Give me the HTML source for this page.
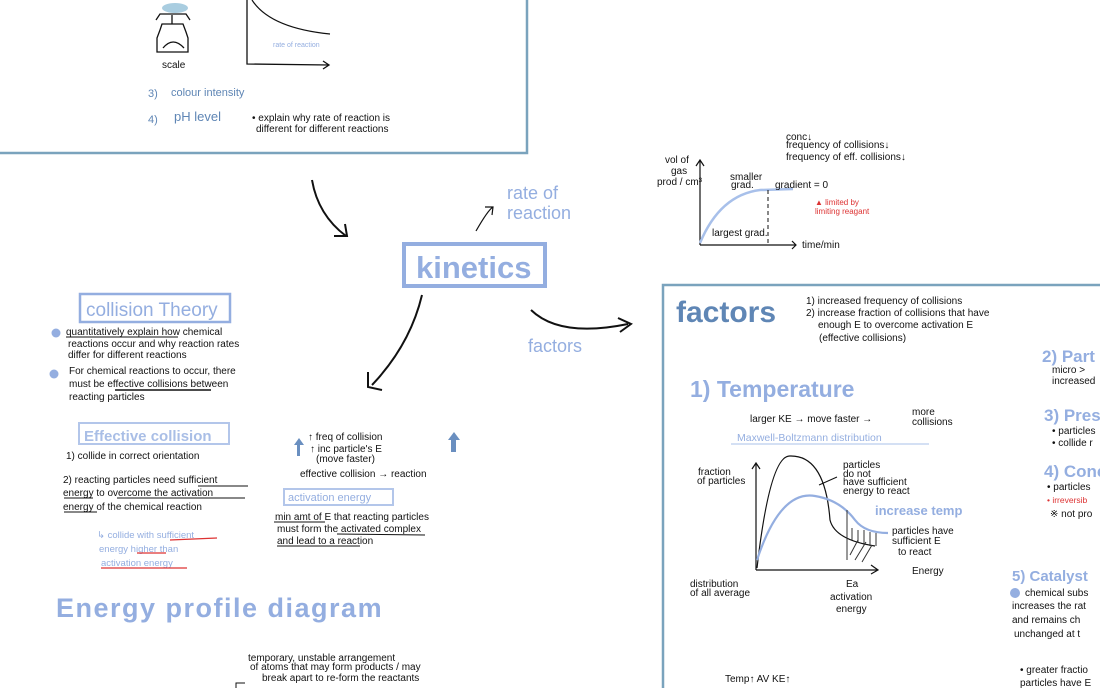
<!DOCTYPE html>
<html><head><meta charset="utf-8"><style>
html,body{margin:0;padding:0;background:#fff;width:1100px;height:688px;overflow:hidden}
svg{display:block}
text{font-family:"Liberation Sans",sans-serif}
.k{fill:#111;font-size:10px}
.b{fill:#94aee0}
.d{fill:#5f86b5}
</style></head><body>
<svg width="1100" height="688" viewBox="0 0 1100 688" xmlns="http://www.w3.org/2000/svg">
<polyline points="0,153 527,153 527,0" fill="none" stroke="#7aa3bd" stroke-width="2.5"/>
<ellipse cx="175" cy="8" rx="13" ry="5" fill="#a9cde0"/>
<path d="M156,20 L160,14 L186,14 L190,20 M172,15 L172,24 M162,24 L183,24 L186,32 L188,38 L188,52 L157,52 L157,38 L160,30 Z" stroke="#111" fill="none" stroke-width="1.3"/>
<path d="M163,48 Q173,36 184,48" stroke="#111" fill="none" stroke-width="1.3"/>
<text x="162" y="68" class="k" font-size="8">scale</text>
<path d="M247,0 L247,64 L329,65 M323,61 L329,65 L323,69" stroke="#111" fill="none" stroke-width="1.3"/>
<path d="M252,0 Q270,28 330,34" stroke="#111" fill="none" stroke-width="1.2"/>
<text x="273" y="47" class="b" font-size="7">rate of reaction</text>
<text x="148" y="97" class="d" font-size="11">3)</text><text x="171" y="96" class="d" font-size="11">colour intensity</text>
<text x="148" y="123" class="d" font-size="11">4)</text><text x="174" y="121" class="d" font-size="13">pH level</text>
<text x="252" y="121" class="k" font-size="9.5">• explain why rate of reaction is</text>
<text x="256" y="132" class="k" font-size="9.5">different for different reactions</text>
<path d="M312,180 Q318,215 346,236 M334,236 L347,236 L345,224" stroke="#111" fill="none" stroke-width="2"/>
<path d="M476,231 Q488,210 493,207 M485,207 L493,207 L492,215" stroke="#111" fill="none" stroke-width="1.2"/>
<text x="507" y="199" class="b" font-size="18">rate of</text>
<text x="507" y="219" class="b" font-size="18">reaction</text>
<rect x="404" y="244" width="141" height="42" fill="none" stroke="#94aee0" stroke-width="4"/>
<text x="416" y="278" class="b" font-size="31" font-weight="bold">kinetics</text>
<path d="M422,295 Q410,345 372,385 M368,372 L368,387 L382,390" stroke="#111" fill="none" stroke-width="2"/>
<path d="M531,310 Q560,338 628,324 M618,318 L631,324 L620,332" stroke="#111" fill="none" stroke-width="2"/>
<text x="528" y="352" class="b" font-size="18">factors</text>
<rect x="80" y="294" width="150" height="28" fill="none" stroke="#94aee0" stroke-width="2.5"/>
<text x="86" y="316" class="b" font-size="19">collision Theory</text>
<circle cx="56" cy="333" r="4.5" fill="#94aee0"/>
<circle cx="54" cy="374" r="4.5" fill="#94aee0"/>
<text x="66" y="335" class="k">quantitatively explain how chemical</text>
<line x1="66" y1="337" x2="178" y2="337" stroke="#111"/>
<text x="68" y="347" class="k">reactions occur and why reaction rates</text>
<text x="68" y="358" class="k">differ for different reactions</text>
<text x="69" y="374" class="k">For chemical reactions to occur, there</text>
<text x="69" y="387" class="k">must be effective collisions between</text>
<line x1="115" y1="390" x2="211" y2="390" stroke="#111" stroke-width="1.5"/>
<text x="69" y="400" class="k">reacting particles</text>
<rect x="79" y="423" width="150" height="21" fill="none" stroke="#b3c6ea" stroke-width="2"/>
<text x="84" y="441" class="b" font-size="15" font-weight="bold" opacity=".8">Effective collision</text>
<text x="66" y="459" class="k" font-size="9.5">1) collide in correct orientation</text>
<text x="63" y="483" class="k" font-size="9.5">2) reacting particles need sufficient</text>
<text x="63" y="496" class="k" font-size="9.5">energy to overcome the activation</text>
<text x="63" y="510" class="k" font-size="9.5">energy of the chemical reaction</text>
<path d="M198,486 L248,486 M64,498 L93,498 M117,498 L245,498 M64,512 L97,512" stroke="#111"/>
<text x="97" y="538" class="b" font-size="9.5">↳ collide with sufficient</text>
<text x="99" y="552" class="b" font-size="9.5">energy higher than</text>
<text x="101" y="566" class="b" font-size="9.5">activation energy</text>
<path d="M170,540 L217,538 M137,553 L166,553 M101,568 L187,568" stroke="#d33" stroke-width="1.2"/>
<path d="M294,445 L299,438 L304,445 L300,445 L300,456 L297,456 L297,445 Z" fill="#6a8fc0"/>
<path d="M448,440 L454,432 L460,440 L456,440 L456,452 L451,452 L451,440 Z" fill="#6a8fc0"/>
<text x="308" y="440" class="k" font-size="9">↑ freq of collision</text>
<text x="310" y="452" class="k" font-size="9">↑ inc particle's E</text>
<text x="316" y="462" class="k" font-size="8.5">(move faster)</text>
<text x="300" y="477" class="k" font-size="12">effective collision  → reaction</text>
<rect x="284" y="489" width="109" height="16" fill="none" stroke="#b3c6ea" stroke-width="2"/>
<text x="288" y="501" class="b" font-size="11">activation energy</text>
<text x="275" y="520" class="k" font-size="9">min amt of E that reacting particles</text>
<text x="277" y="532" class="k" font-size="9">must form the activated complex</text>
<text x="277" y="544" class="k" font-size="9">and lead to a reaction</text>
<path d="M274,522 L325,522 M337,534 L425,535 M277,546 L360,546" stroke="#111"/>
<text x="56" y="617" class="b" font-size="27" font-weight="bold" letter-spacing="1.5">Energy profile diagram</text>
<text x="248" y="661" class="k" font-size="9">temporary, unstable arrangement</text>
<text x="250" y="670" class="k" font-size="9">of atoms that may form products / may</text>
<text x="262" y="681" class="k" font-size="9">break apart to re-form the reactants</text>
<path d="M236,688 L236,683 L245,683" stroke="#111" fill="none"/>
<text x="786" y="140" class="k" font-size="7.5">conc↓</text>
<text x="786" y="148" class="k" font-size="7.5">frequency of collisions↓</text>
<text x="786" y="160" class="k" font-size="7.5">frequency of eff. collisions↓</text>
<text x="665" y="163" class="k" font-size="7.5">vol of</text>
<text x="671" y="174" class="k" font-size="7.5">gas</text>
<text x="657" y="185" class="k" font-size="7.5">prod / cm³</text>
<path d="M700,245 L700,160 M696,166 L700,160 L704,166 M700,245 L796,245 M792,241 L796,245 L792,249" stroke="#111" fill="none" stroke-width="1.2"/>
<path d="M700,243 Q720,195 760,190 L793,189" stroke="#a8c0ea" fill="none" stroke-width="2.5"/>
<path d="M768,190 L768,245" stroke="#111" stroke-dasharray="4,3"/>
<text x="730" y="180" class="k" font-size="7.5">smaller</text><text x="731" y="188" class="k" font-size="7.5">grad.</text>
<text x="775" y="188" class="k" font-size="7.5">gradient = 0</text>
<text x="712" y="236" class="k" font-size="7.5">largest grad.</text>
<text x="802" y="248" class="k" font-size="8.5">time/min</text>
<text x="815" y="205" fill="#d33" font-size="8">▲ limited by</text>
<text x="815" y="214" fill="#d33" font-size="8">limiting reagant</text>
<polyline points="1100,285 663,285 663,688" fill="none" stroke="#7aa3bd" stroke-width="2.5"/>
<text x="676" y="322" class="d" font-size="30" font-weight="bold">factors</text>
<text x="806" y="304" class="k" font-size="9">1) increased frequency of collisions</text>
<text x="806" y="316" class="k" font-size="9">2) increase fraction of collisions that have</text>
<text x="818" y="328" class="k" font-size="9">enough E to overcome activation E</text>
<text x="819" y="341" class="k" font-size="9">(effective collisions)</text>
<text x="690" y="397" class="b" font-size="23" font-weight="bold">1) Temperature</text>
<text x="750" y="422" class="k" font-size="10">larger KE → move faster →</text>
<text x="912" y="415" class="k" font-size="9">more</text><text x="912" y="425" class="k" font-size="9">collisions</text>
<text x="737" y="441" class="b" font-size="10.5">Maxwell-Boltzmann distribution</text>
<line x1="731" y1="444" x2="929" y2="444" stroke="#a8c0ea"/>
<text x="698" y="475" class="k" font-size="8">fraction</text>
<text x="697" y="484" class="k" font-size="8">of particles</text>
<path d="M756,570 L756,463 M752,469 L756,463 L760,469 M756,570 L877,570 M871,565 L878,570 L871,574" stroke="#111" fill="none" stroke-width="1.2"/>
<path d="M757,568 Q770,455 790,456 Q825,455 830,520 Q835,540 875,546" stroke="#111" fill="none" stroke-width="1.2"/>
<path d="M757,560 Q780,490 815,496 Q840,500 855,520 Q865,533 888,533" stroke="#94aee0" fill="none" stroke-width="2.2"/>
<path d="M847,510 L847,560 M852,528 L852,540 M858,530 L858,543 M864,530 L864,545 M870,532 L870,546 M876,533 L876,546 M850,555 L858,540 M855,560 L866,542 M862,562 L872,545" stroke="#333" stroke-width="1" fill="none"/>
<text x="843" y="468" class="k" font-size="8">particles</text>
<text x="843" y="477" class="k" font-size="8">do not</text>
<text x="843" y="485" class="k" font-size="8">have sufficient</text>
<text x="843" y="494" class="k" font-size="8">energy to react</text>
<line x1="819" y1="485" x2="837" y2="477" stroke="#111"/>
<text x="875" y="515" class="b" font-size="13" font-weight="bold">increase temp</text>
<text x="892" y="534" class="k" font-size="8">particles have</text>
<text x="892" y="544" class="k" font-size="8">sufficient E</text>
<text x="898" y="555" class="k" font-size="8">to react</text>
<text x="912" y="574" class="k" font-size="6.5">Energy</text>
<text x="690" y="587" class="k" font-size="8">distribution</text>
<text x="690" y="596" class="k" font-size="8">of all average</text>
<text x="846" y="587" class="k" font-size="10">Ea</text>
<text x="830" y="600" class="k" font-size="10">activation</text>
<text x="836" y="612" class="k" font-size="10">energy</text>
<text x="725" y="682" class="k" font-size="8">Temp↑  AV KE↑</text>
<text x="1042" y="362" class="b" font-size="17" font-weight="bold">2) Part</text>
<text x="1052" y="373" class="k" font-size="8.5">micro ></text>
<text x="1052" y="384" class="k" font-size="8.5">increased</text>
<text x="1044" y="421" class="b" font-size="17" font-weight="bold">3) Press</text>
<text x="1052" y="434" class="k" font-size="8.5">• particles</text>
<text x="1052" y="446" class="k" font-size="8.5">• collide r</text>
<text x="1044" y="477" class="b" font-size="17" font-weight="bold">4) Conc</text>
<text x="1047" y="490" class="k" font-size="8.5">•  particles</text>
<text x="1047" y="503" fill="#d33" font-size="8.5">•  irreversib</text>
<text x="1050" y="517" class="k" font-size="8.5">※ not pro</text>
<text x="1012" y="581" class="b" font-size="15" font-weight="bold">5) Catalyst</text>
<circle cx="1015" cy="593" r="5" fill="#94aee0"/>
<text x="1025" y="596" class="k" font-size="9">chemical subs</text>
<text x="1012" y="609" class="k" font-size="9">increases the rat</text>
<text x="1012" y="623" class="k" font-size="9">and remains ch</text>
<text x="1014" y="637" class="k" font-size="9">unchanged at t</text>
<text x="1020" y="673" class="k" font-size="8.5">• greater fractio</text>
<text x="1020" y="686" class="k" font-size="8.5">particles have E</text>
</svg>
</body></html>
